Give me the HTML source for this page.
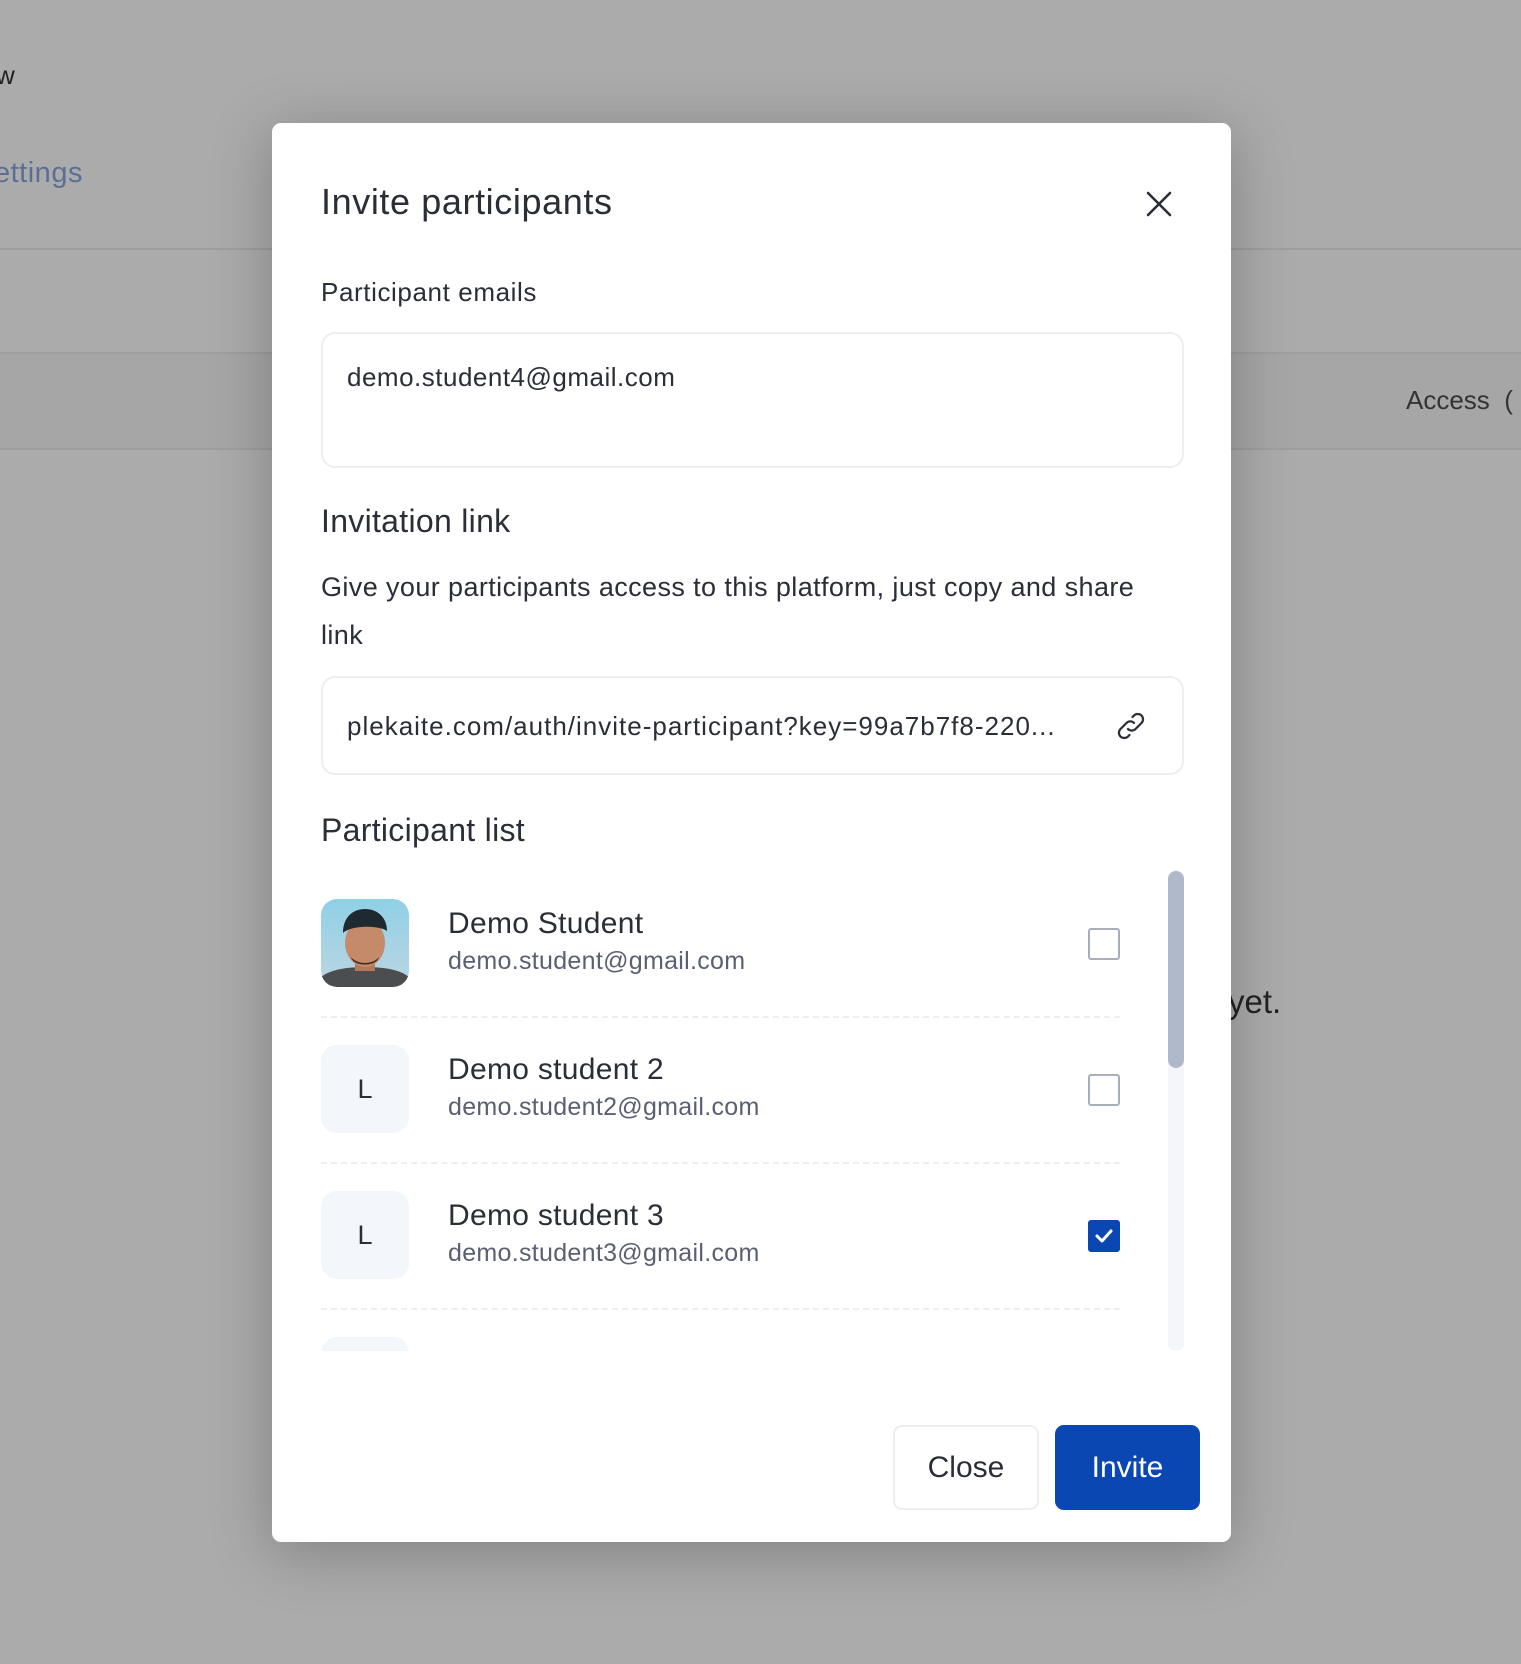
<!DOCTYPE html>
<html><head><meta charset="utf-8"><style>
*{box-sizing:border-box;margin:0;padding:0}
body{width:1521px;height:1664px;background:#ababab;position:relative;overflow:hidden;font-family:"Liberation Sans",sans-serif;color:#2b2e36}
.a{position:absolute}
.line{position:absolute;left:0;right:0;height:2px;background:#9e9e9e}
.modal{position:absolute;left:272px;top:123px;width:959px;height:1419px;background:#fff;border-radius:9px;box-shadow:0 10px 60px rgba(0,0,0,.25)}
.t{position:absolute;white-space:nowrap}
.inp{position:absolute;left:49px;width:863px;border:2px solid #eceef2;border-radius:14px}
.row{position:absolute;left:49px;width:799px;height:146px}
.av{position:absolute;left:0;top:0;width:88px;height:88px;border-radius:16px;background:#f3f6fa;text-align:center;line-height:88px;font-size:27px;color:#2b2e36}
.nm{position:absolute;left:127px;top:8px;font-size:30px;color:#2b2e36;letter-spacing:.3px}
.em{position:absolute;left:127px;top:48px;font-size:25px;color:#5b5f73;letter-spacing:.3px}
.cb{position:absolute;left:767px;top:29px;width:32px;height:32px;border:2px solid #a8afbc;border-radius:3px}
.dv{position:absolute;left:0;top:117px;width:799px;border-top:2px dashed #eceef2}
</style></head><body>
<div class="t a" style="left:-4px;top:60px;font-size:26px;color:#222">w</div>
<div class="t a" style="left:-6px;top:157px;font-size:29px;color:#5b6f96;letter-spacing:.5px">ettings</div>
<div class="line" style="top:248px"></div>
<div class="a" style="left:0;right:0;top:353px;height:96px;background:#a6a6a6"></div>
<div class="line" style="top:352px"></div>
<div class="line" style="top:448px"></div>
<div class="t a" style="left:1406px;top:385px;font-size:26px;color:#333">Access &nbsp;(</div>
<div class="t a" style="left:1228px;top:983px;font-size:33px;color:#222">yet.</div>

<div class="modal">
  <div class="t" style="left:49px;top:58px;font-size:36px;letter-spacing:.6px;color:#2b2e36">Invite participants</div>
  <svg class="a" style="left:874px;top:68px" width="26" height="26" viewBox="0 0 26 26"><path d="M2 2L24 24M24 2L2 24" stroke="#2b2e36" stroke-width="2.6" stroke-linecap="round"/></svg>
  <div class="t" style="left:49px;top:154px;font-size:26px;letter-spacing:.6px;color:#2b2e36">Participant emails</div>
  <div class="inp" style="top:209px;height:136px"><div class="t" style="left:24px;top:28px;font-size:26px;letter-spacing:.5px;color:#2b2e36">demo.student4@gmail.com</div></div>
  <div class="t" style="left:49px;top:380px;font-size:32px;letter-spacing:.3px;color:#2b2e36">Invitation link</div>
  <div class="t" style="left:49px;top:440px;font-size:27px;letter-spacing:.4px;line-height:48px;color:#2b2e36">Give your participants access to this platform, just copy and share<br>link</div>
  <div class="inp" style="top:553px;height:99px"><div class="t" style="left:24px;top:33px;font-size:26px;letter-spacing:1px;color:#2b2e36">plekaite.com/auth/invite-participant?key=99a7b7f8-220...</div>
    <svg class="a" style="left:790px;top:30px" width="36" height="36" viewBox="0 0 24 24" fill="none" stroke="#2b2e36" stroke-width="1.5" stroke-linecap="round"><path d="M10 14a3.5 3.5 0 0 0 5 0l4-4a3.5 3.5 0 0 0-5-5l-1 1"/><path d="M14 10a3.5 3.5 0 0 0-5 0l-4 4a3.5 3.5 0 0 0 5 5l1-1"/></svg>
  </div>
  <div class="t" style="left:49px;top:689px;font-size:32px;letter-spacing:.3px;color:#2b2e36">Participant list</div>

  <div class="a" style="left:0;top:747px;width:959px;height:481px;overflow:hidden">
    <div class="a" style="left:896px;top:0;width:16px;height:481px;background:#f4f6f9;border-radius:8px"></div>
    <div class="a" style="left:896px;top:1px;width:16px;height:197px;background:#b0b9ca;border-radius:8px"></div>
    <div class="row" style="top:29px">
      <svg class="av" viewBox="0 0 88 88" style="background:none"><defs><clipPath id="c"><rect width="88" height="88" rx="16"/></clipPath><linearGradient id="g" x1="0" y1="0" x2="0" y2="1"><stop offset="0" stop-color="#8fd0e6"/><stop offset="1" stop-color="#bcd6e3"/></linearGradient></defs><g clip-path="url(#c)"><rect width="88" height="88" fill="url(#g)"/><path d="M0 88V78c10-8 28-10 44-10s34 2 44 10v10z" fill="#4b4d4f"/><rect x="34" y="52" width="20" height="20" fill="#b27a5d"/><ellipse cx="44" cy="44" rx="20" ry="24" fill="#c48a6a"/><path d="M22 34c0-16 10-24 22-24s22 8 22 22c-8-6-36-6-44 2z" fill="#1f2a30"/><path d="M30 58c6 8 22 8 28 0c-2 10-26 10-28 0z" fill="#3a2a22"/></g></svg>
      <div class="nm">Demo Student</div><div class="em">demo.student@gmail.com</div>
      <div class="cb"></div><div class="dv"></div>
    </div>
    <div class="row" style="top:175px">
      <div class="av">L</div>
      <div class="nm">Demo student 2</div><div class="em">demo.student2@gmail.com</div>
      <div class="cb"></div><div class="dv"></div>
    </div>
    <div class="row" style="top:321px">
      <div class="av">L</div>
      <div class="nm">Demo student 3</div><div class="em">demo.student3@gmail.com</div>
      <div class="cb" style="background:#0b47b3;border-color:#0b47b3"><svg width="28" height="28" viewBox="0 0 28 28" style="position:absolute;left:0;top:0"><path d="M7 14l5 5 9-10" stroke="#fff" stroke-width="3" fill="none" stroke-linecap="round" stroke-linejoin="round"/></svg></div><div class="dv"></div>
    </div>
    <div class="row" style="top:467px"><div class="av"></div></div>
  </div>

  <div class="a" style="left:621px;top:1302px;width:146px;height:85px;border:2px solid #eceef2;border-radius:9px;text-align:center;line-height:81px;font-size:30px;color:#2b2e36">Close</div>
  <div class="a" style="left:783px;top:1302px;width:145px;height:85px;background:#0b47b3;border-radius:9px;text-align:center;line-height:85px;font-size:30px;color:#fff">Invite</div>
</div>
</body></html>
